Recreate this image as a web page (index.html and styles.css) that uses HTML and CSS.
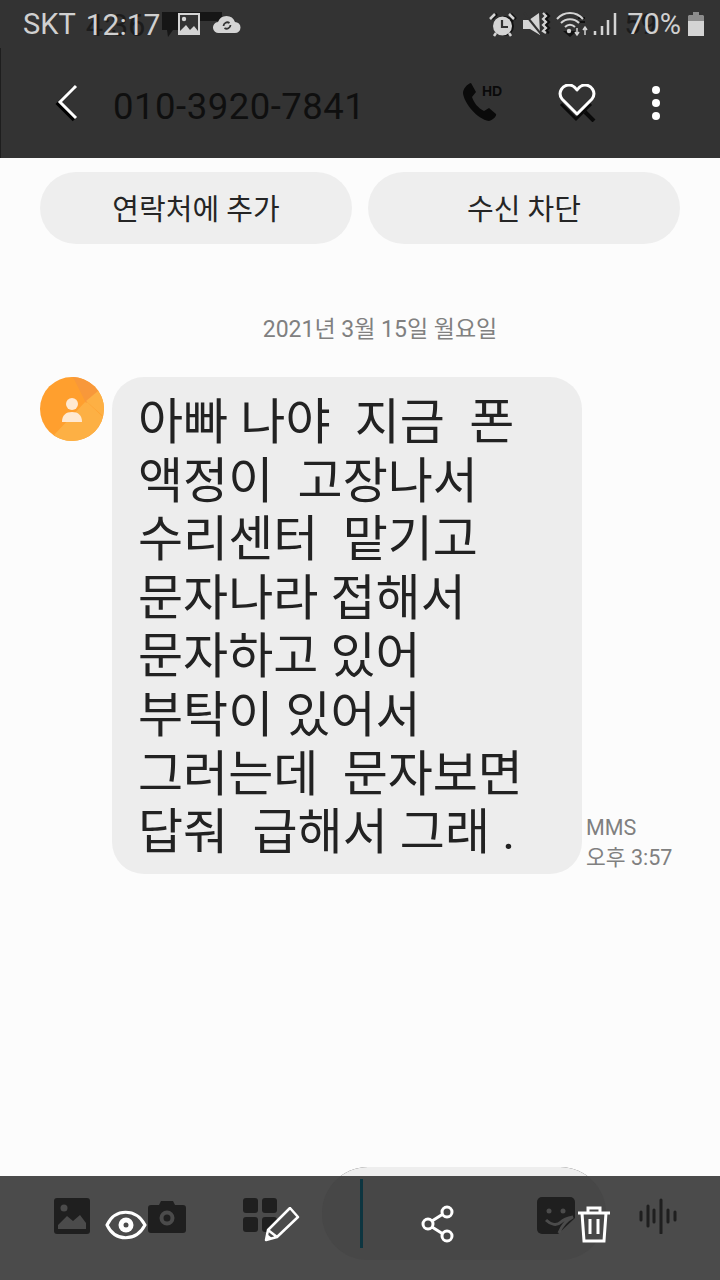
FILE: index.html
```html
<!DOCTYPE html>
<html lang="ko">
<head>
    <meta charset="UTF-8">
    <meta name="viewport" content="width=device-width, initial-scale=1.0">
    <title>010-3920-7841</title>
    <link rel="stylesheet" href="styles.css">
</head>
<body>

    <header class="header">
        <div class="status">
            <div class="status-left">
                <span class="carrier">SKT</span>
                <span class="clock"><span class="ghost ghost-clock">4:36</span><span class="over">12:17</span></span>
                <svg class="ghost-msg" width="62" height="30" viewBox="0 0 62 30"><path fill="#161616" d="M2 0h60v9H18v9h-5l-5 7-1-7H2z"/></svg>
                <svg class="status-icon pic" width="24" height="24" viewBox="0 0 24 24"><path fill="#d4d4d4" d="M1 1h22v22H1z"/><path fill="#333" d="M3 3h18v16l-4-5-4 4-4-5-6 6z"/><circle cx="7" cy="7" r="2.200" fill="#d4d4d4"/></svg>
                <svg class="status-icon cloud" width="28" height="20" viewBox="0 0 28 20"><path fill="#d4d4d4" d="M6 19a5.500 5.500 0 0 1-1-11 9 9 0 0 1 17 0 5.500 5.500 0 0 1 0 11z"/><path d="M10.500 12a3.800 3.800 0 0 1 6-3M17.500 11a3.800 3.800 0 0 1-6 3" fill="none" stroke="#333" stroke-width="1.800"/></svg>
            </div>
            <div class="status-right">
                <svg width="28" height="25" viewBox="0 0 28 25"><path d="M5 9L9 5M23 9l-4-4M2 6l5-5M26 6l-5-5" stroke="#111" stroke-width="2.500" transform="translate(1 1)"/><circle cx="15" cy="14" r="10" fill="#111"/><circle cx="13.500" cy="14" r="9.500" fill="#d4d4d4"/><path d="M13 8v7h6" fill="none" stroke="#333" stroke-width="2.200"/><path d="M1 7l5-5M25 7l-5-5M5 24l2-3M22 24l-2-3" stroke="#d4d4d4" stroke-width="2.500"/></svg>
                <svg width="29" height="24" viewBox="0 0 29 24"><path fill="#d4d4d4" d="M1 8h6l10-7 1 22-10-6H1z"/><path d="M2 1l17 21" stroke="#333" stroke-width="2"/><path d="M24 1l3 3-3 3 3 3-3 3 3 3-3 3 3 2" fill="none" stroke="#111" stroke-width="2.200"/><path d="M21 1l3 3-3 3 3 3-3 3 3 3-3 3 3 2" fill="none" stroke="#d4d4d4" stroke-width="2.200"/></svg>
                <svg width="32" height="25" viewBox="0 0 32 25"><path d="M22 6h7M24 10h5" stroke="#111" stroke-width="2"/><path d="M7 19l7 6 7-6z" fill="#111"/><path d="M1 7c7-8 19-8 26 0M5 11c5-5 13-5 18 0M9 15c3-3 7-3 10 0" fill="none" stroke="#d4d4d4" stroke-width="2"/><circle cx="13" cy="19" r="2.200" fill="#d4d4d4"/><path d="M21 16v7M29 23v-8M19 20l2 3 2-3M27 18l2-3 2 3" fill="none" stroke="#d4d4d4" stroke-width="1.500"/></svg>
                <svg width="24" height="24" viewBox="0 0 24 24"><path d="M2 23v-4M9 23v-9M15 23V8M22 23V1" stroke="#d4d4d4" stroke-width="2.500"/></svg>
                <span class="battery-text"><span class="ghost ghost-batt">59</span><span class="over">70%</span></span>
                <svg width="16" height="24" viewBox="0 0 16 24"><path fill="#8c8c8c" d="M5 0h6v3h4l1 1v6H0V4l1-1h4z"/><path fill="#d4d4d4" d="M0 9h16v15H0z"/></svg>
            </div>
        </div>
        <div class="toolbar">
            <svg class="back" width="30" height="38" viewBox="0 0 30 38"><path d="M23 4L7 20l16 16" fill="none" stroke="#000" stroke-width="3.500"/><path d="M25 2L9 18l16 16" fill="none" stroke="#fff" stroke-width="3"/></svg>
            <h1 class="number">010-3920-7841</h1>
            <svg class="call" width="44" height="42" viewBox="0 0 44 42"><path fill="#0a0a0a" d="M10 1l5 9-4 5c2 6 6 11 12 14l5-3 7 6c1 2-3 6-7 7C16 37 3 21 2 11 2 7 6 2 10 1z"/><text x="21" y="14" class="hd">HD</text></svg>
            <svg class="heart" width="42" height="38" viewBox="0 0 42 38"><path d="M27 28l9 9" stroke="#0a0a0a" stroke-width="4"/><path d="M4 19l15 15 15-15" fill="none" stroke="#0a0a0a" stroke-width="3" transform="translate(-1 1)"/><path d="M19 30L4 15C-1 8 5 1 11 1c4 0 6 2 8 5 2-3 4-5 8-5 6 0 12 7 7 14z" fill="none" stroke="#fff" stroke-width="3" stroke-linejoin="round"/></svg>
            <div class="dots"><i></i><i></i><i></i></div>
        </div>
    </header>

    <main class="content">
        <div class="actions">
            <button class="pill-btn">연락처에 추가</button>
            <button class="pill-btn">수신 차단</button>
        </div>

        <div class="date">2021년 3월 15일 월요일</div>

        <div class="message">
            <div class="avatar">
                <svg width="64" height="64" viewBox="0 0 64 64"><circle cx="32" cy="32" r="32" fill="#ff9f2e"/><path fill="#fdb044" d="M32 64a32 32 0 0 0 31-24L46 24 14 58c5 4 11 6 18 6z"/><path fill="#f8983a" d="M32 0c9 0 20 5 26 14L46 26 34 2z"/><path fill="#fdb044" d="M58 14c4 5 6 11 6 18l-1 7-17-15z"/><circle cx="32" cy="27" r="6" fill="#ffe9d2"/><path fill="#ffe9d2" d="M22 45c0-7 4-10 10-10s10 3 10 10z"/></svg>
            </div>
            <div class="bubble">아빠 나야  지금  폰
액정이  고장나서
수리센터  맡기고
문자나라 접해서
문자하고 있어
부탁이 있어서
그러는데  문자보면
답줘  급해서 그래 .</div>
            <div class="meta">MMS<br>오후 3:57</div>
        </div>
    </main>

    <footer class="bottom">
        <div class="float-pill"></div>
        <div class="divider"></div>
        <svg class="ico-gallery" width="38" height="38" viewBox="0 0 38 38"><rect x="1" y="1" width="36" height="36" rx="3" fill="#1f1f1f"/><circle cx="11" cy="11" r="3.500" fill="#4b4b4b"/><path fill="#4b4b4b" d="M5 32v-4l9-9 6 5 7-6 6 8v6z"/></svg>
        <svg class="ico-eye" width="42" height="32" viewBox="0 0 42 32"><path d="M2 16C10-1 31-1 40 16 31 33 10 33 2 16z" fill="none" stroke="#fff" stroke-width="3"/><circle cx="21" cy="16" r="7.500" fill="#fff"/><circle cx="21" cy="16" r="2.500" fill="#4b4b4b"/></svg>
        <svg class="ico-camera" width="38" height="34" viewBox="0 0 38 34"><path fill="#1f1f1f" d="M3 5h8l2-4h12l2 4h8a3 3 0 0 1 3 3v22a3 3 0 0 1-3 3H3a3 3 0 0 1-3-3V8a3 3 0 0 1 3-3z"/><circle cx="19" cy="18" r="5.500" fill="none" stroke="#4b4b4b" stroke-width="4"/></svg>
        <svg class="ico-apps" width="36" height="36" viewBox="0 0 36 36"><rect x="1" width="15" height="15" rx="3" fill="#1f1f1f"/><rect x="20" width="15" height="15" rx="3" fill="#1f1f1f"/><rect x="1" y="19" width="15" height="15" rx="3" fill="#1f1f1f"/><rect x="20" y="19" width="15" height="15" rx="3" fill="#1f1f1f"/></svg>
        <svg class="ico-pencil" width="36" height="36" viewBox="0 0 36 36"><path d="M2 33l2-10L26 1l8 9-21 20zM4 23l9 7" fill="#4b4b4b" stroke="#fff" stroke-width="2.500" stroke-linejoin="round"/><path d="M2 33l1-6 5 4z" fill="#fff"/></svg>
        <svg class="ico-share" width="34" height="38" viewBox="0 0 34 38"><g fill="none" stroke="#fff" stroke-width="3"><circle cx="26" cy="7" r="5"/><circle cx="7" cy="19" r="5"/><circle cx="26" cy="31" r="5"/><path d="M11 16l11-7M11 22l11 7"/></g></svg>
        <svg class="ico-sticker" width="38" height="38" viewBox="0 0 38 38"><path fill="#1f1f1f" d="M5 0h28a5 5 0 0 1 5 5v16L21 37H5a5 5 0 0 1-5-5V5a5 5 0 0 1 5-5z"/><circle cx="12" cy="14" r="2.500" fill="#4b4b4b"/><circle cx="26" cy="14" r="2.500" fill="#4b4b4b"/><path d="M9 23c5 5 11 6 15 2 3-3 7-4 12-5-6 3-11 8-14 16" fill="none" stroke="#4b4b4b" stroke-width="3"/></svg>
        <svg class="ico-trash" width="34" height="38" viewBox="0 0 34 38"><path d="M1 8h32M11 8V3h12v5M5 8l2 28h20l2-28M13 14v15M21 14v15" fill="none" stroke="#fff" stroke-width="3"/></svg>
        <svg class="ico-voice" width="38" height="36" viewBox="0 0 38 36"><path d="M2 14v8M9 8v20M15 12v12M22 2v33M29 12v12M36 14v8" fill="none" stroke="#1f1f1f" stroke-width="3" stroke-linecap="round"/></svg>
    </footer>

</body>
</html>
```

FILE: styles.css
```css
* {
    box-sizing: border-box;
}
body {
    margin: 0;
    width: 720px;
    height: 1280px;
    display: flex;
    flex-direction: column;
    font-family: Roboto, "Noto Sans CJK KR", sans-serif;
    background: #fcfcfc;
    overflow: hidden;
}
.header {
    height: 158px;
    flex-shrink: 0;
    background: #333;
    border-left: 1px solid #1e1e1e;
}
.status {
    height: 48px;
    padding: 0 16px 0 22px;
    display: flex;
    justify-content: space-between;
    align-items: center;
    color: #d0d0d0;
    font-size: 29px;
    border-left: 1px solid #333;
    margin-left: -1px;
    background: #333;
}
.status-left,
.status-right {
    display: flex;
    align-items: center;
}
.status-right {
    gap: 5px;
}
.clock {
    position: relative;
    margin-left: 10px;
    font-size: 30px;
}
.over {
    position: relative;
}
.ghost {
    position: absolute;
    color: #1c1c1c;
    top: 0;
}
.ghost-clock {
    left: 0;
    font-size: 31px;
}
.ghost-msg {
    position: absolute;
    left: 160px;
    top: 12px;
}
.status-icon {
    position: relative;
}
.pic {
    margin-left: 17px;
}
.cloud {
    margin-left: 12px;
}
.battery-text {
    position: relative;
    margin: 0 2px 0 5px;
}
.ghost-batt {
    left: -3px;
}
.toolbar {
    height: 110px;
    display: flex;
    align-items: center;
    padding-left: 50px;
}
.number {
    margin: 6px 0 0 32px;
    font-size: 36.5px;
    font-weight: 400;
    color: #0f0f0f;
    letter-spacing: 0.5px;
    flex: 1;
}
.call {
    margin-right: 53px;
}
.hd {
    font: 700 14px "Liberation Sans", sans-serif;
    fill: #0a0a0a;
}
.heart {
    margin-right: 50px;
}
.dots {
    width: 12px;
    margin-right: 58px;
    display: flex;
    flex-direction: column;
    gap: 5px;
}
.dots i {
    height: 8px;
    border-radius: 50%;
    background: #fff;
    margin: 0 2px;
}
.content {
    flex: 1;
    padding: 14px 40px 0;
}
.actions {
    display: flex;
    gap: 16px;
}
.pill-btn {
    flex: 1;
    height: 72px;
    border: none;
    border-radius: 36px;
    background: #eeeeee;
    color: #252525;
    font-family: inherit;
    font-size: 29px;
    padding: 0 0 2px;
}
.date {
    margin-top: 71px;
    padding-left: 40px;
    text-align: center;
    font-size: 23px;
    line-height: 30px;
    color: #808080;
}
.message {
    margin-top: 32px;
    display: flex;
    align-items: flex-end;
    position: relative;
    padding-left: 72px;
}
.avatar {
    position: absolute;
    left: 0;
    top: 0;
    width: 64px;
    height: 64px;
}
.bubble {
    width: 470px;
    height: 497px;
    padding: 17px 0 0 26px;
    border-radius: 32px;
    background: #ededed;
    color: #222;
    font-size: 49px;
    line-height: 58.6px;
    white-space: pre;
}
.meta {
    margin: 0 0 1px 4px;
    font-size: 21.5px;
    line-height: 30px;
    color: #808080;
}
.bottom {
    height: 104px;
    flex-shrink: 0;
    position: relative;
    background: #4b4b4b;
}
.bottom svg {
    position: absolute;
}
.float-pill {
    position: absolute;
    left: 322px;
    top: -9px;
    width: 284px;
    height: 93px;
    border-radius: 46px;
    background: #474747;
    overflow: hidden;
}
.float-pill::before {
    content: "";
    position: absolute;
    left: 0;
    top: 0;
    width: 100%;
    height: 9px;
    background: #eeeeee;
}
.divider {
    position: absolute;
    left: 360px;
    top: 3px;
    width: 3px;
    height: 69px;
    background: #0d3540;
}
.ico-gallery { left: 53px; top: 21px; }
.ico-eye { left: 105px; top: 33px; }
.ico-camera { left: 148px; top: 24px; }
.ico-apps { left: 242px; top: 22px; }
.ico-pencil { left: 264px; top: 31px; }
.ico-share { left: 421px; top: 29px; }
.ico-sticker { left: 537px; top: 21px; }
.ico-trash { left: 577px; top: 29px; }
.ico-voice { left: 639px; top: 22px; }
```
